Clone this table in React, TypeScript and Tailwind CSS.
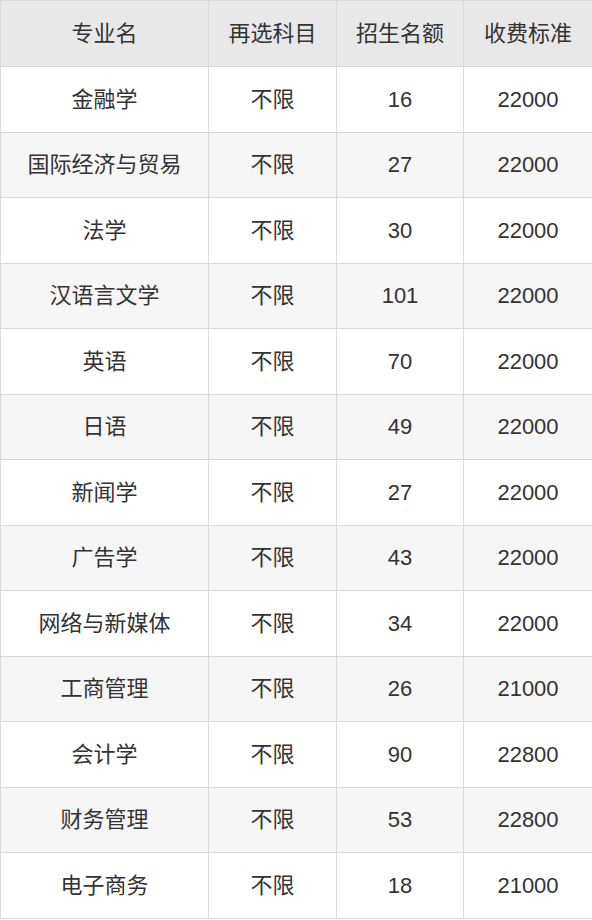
import React from "react";

const rows: [string, string, string, string][] = [
  ["金融学", "不限", "16", "22000"],
  ["国际经济与贸易", "不限", "27", "22000"],
  ["法学", "不限", "30", "22000"],
  ["汉语言文学", "不限", "101", "22000"],
  ["英语", "不限", "70", "22000"],
  ["日语", "不限", "49", "22000"],
  ["新闻学", "不限", "27", "22000"],
  ["广告学", "不限", "43", "22000"],
  ["网络与新媒体", "不限", "34", "22000"],
  ["工商管理", "不限", "26", "21000"],
  ["会计学", "不限", "90", "22800"],
  ["财务管理", "不限", "53", "22800"],
  ["电子商务", "不限", "18", "21000"],
];

const headers = ["专业名", "再选科目", "招生名额", "收费标准"];

const App: React.FC = () => {
  return (
    <div className="w-[592px] bg-white font-['Liberation_Sans','Noto_Sans_CJK_SC',sans-serif] text-[22px] text-[#333]">
      <table className="w-[592px] table-fixed border-collapse">
        <colgroup>
          <col className="w-[208px]" />
          <col className="w-[128px]" />
          <col className="w-[127px]" />
          <col className="w-[129px]" />
        </colgroup>
        <thead>
          <tr className="h-[66px] bg-[#e8e8e8]">
            {headers.map((h) => (
              <th key={h} className="border border-[#d9d9d9] p-0 text-center font-normal">
                {h}
              </th>
            ))}
          </tr>
        </thead>
        <tbody>
          {rows.map((r, i) => (
            <tr key={r[0]} className={i % 2 === 1 ? "h-[65.5px] bg-[#f6f6f6]" : "h-[65.5px] bg-white"}>
              {r.map((c, j) => (
                <td key={j} className="border border-[#d9d9d9] p-0 text-center">
                  {c}
                </td>
              ))}
            </tr>
          ))}
        </tbody>
      </table>
    </div>
  );
};

export default App;
